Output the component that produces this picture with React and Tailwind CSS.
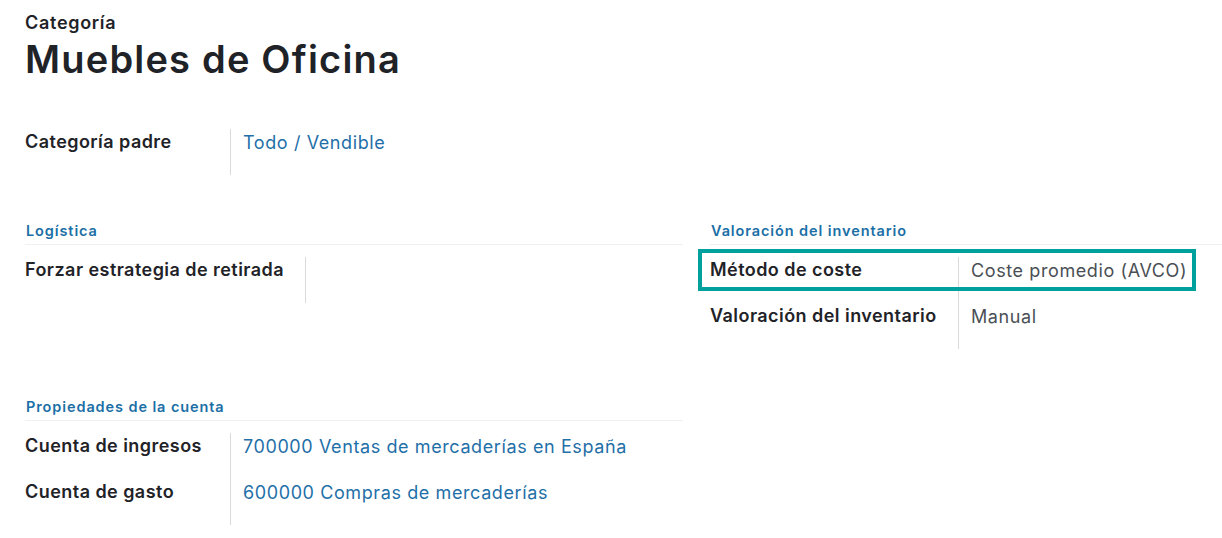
import React from 'react';

const font = { fontFamily: 'Inter, "Noto Sans", sans-serif' };

function Field({ label, labelWidth, children, valueClass = 'text-[#1f6fa8]' }) {
  return (
    <div className="flex h-[46px]">
      <div
        className="shrink-0 text-[18px] font-semibold leading-[26px] tracking-[0.45px] text-[#1f2328]"
        style={{ width: labelWidth }}
      >
        {label}
      </div>
      <div className={`border-l border-[#d8dadd] pl-3 pt-px text-[18px] leading-[26px] tracking-[0.6px] ${valueClass}`}>
        {children}
      </div>
    </div>
  );
}

function SectionTitle({ children }) {
  return (
    <div className="border-b border-[#eef0f2] pb-[2px] pl-px text-[14.5px] font-semibold leading-[22px] tracking-[0.9px] text-[#1b6fa6]">
      {children}
    </div>
  );
}

export default function App() {
  return (
    <div className="h-[538px] w-[1222px] overflow-hidden bg-white" style={font}>
      <div className="pl-[25px] pt-[12px]">
        <div className="text-[18px] font-semibold leading-[22px] tracking-[0.7px] text-[#1f2328]">Categoría</div>
        <h1 className="mt-[2px] text-[38px] font-semibold leading-[46px] tracking-[1.2px] text-[#1f2328]">
          Muebles de Oficina
        </h1>
      </div>

      <div className="mt-[47px] pl-[25px]">
        <Field label="Categoría padre" labelWidth="205px">
          Todo / Vendible
        </Field>
      </div>

      <div className="mt-[45px] flex">
        <div className="w-[683px] shrink-0">
          <div className="ml-[25px]">
            <SectionTitle>Logística</SectionTitle>
          </div>
          <div className="mt-[12px] pl-[25px]">
            <Field label="Forzar estrategia de retirada" labelWidth="280px">
              {''}
            </Field>
          </div>

          <div className="mt-[93px] ml-[25px]">
            <SectionTitle>Propiedades de la cuenta</SectionTitle>
          </div>
          <div className="mt-[12px] pl-[25px]">
            <Field label="Cuenta de ingresos" labelWidth="205px">
              700000 Ventas de mercaderías en España
            </Field>
            <Field label="Cuenta de gasto" labelWidth="205px">
              600000 Compras de mercaderías
            </Field>
          </div>
        </div>

        <div className="ml-[27px] flex-1">
          <SectionTitle>Valoración del inventario</SectionTitle>
          <div className="relative mt-[12px]">
            <Field label="Método de coste" labelWidth="248px" valueClass="text-[#4a4f55]">
              Coste promedio (AVCO)
            </Field>
            <Field label="Valoración del inventario" labelWidth="248px" valueClass="text-[#4a4f55]">
              Manual
            </Field>
            <div className="pointer-events-none absolute left-[-12px] top-[-8px] h-[42px] w-[498px] border-[4px] border-[#00a09d]" />
          </div>
        </div>
      </div>
    </div>
  );
}
